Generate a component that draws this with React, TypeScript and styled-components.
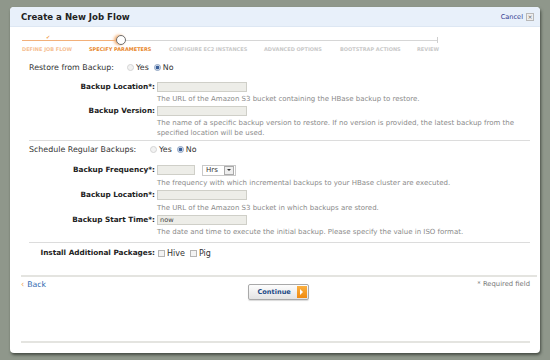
import React from 'react';
import styled, { createGlobalStyle } from 'styled-components';

const Global = createGlobalStyle`
   body {
      margin: 0;
      background: #8f978b;
      font-family: "DejaVu Sans", Verdana, sans-serif;
      color: #333;
   }
`

const Dialog = styled.div`
   margin: 7px 10px;
   width: 530px;
   height: 346px;
   background: #fff;
   border-radius: 4px;
   box-shadow: 1px 2px 3px rgba(40, 45, 38, 0.7);
   overflow: hidden;
   display: flex;
   flex-direction: column;
`

const Header = styled.div`
   display: flex;
   align-items: center;
   justify-content: space-between;
   height: 20px;
   padding: 0 6px 0 11px;
   background: #e8f0fa;
   border-bottom: 1px solid #dde7f3;
   box-sizing: border-box;
`

const Title = styled.div`
   font-size: 8.6px;
   font-weight: bold;
   color: #222;
`

const CancelBox = styled.div`
   display: flex;
   align-items: center;
   gap: 3px;
   font-size: 6.6px;
   color: #333a8f;
`

const CloseX = styled.span`
   display: inline-flex;
   align-items: center;
   justify-content: center;
   width: 6px;
   height: 6px;
   border: 1px solid #b8b8b8;
   background: #eee;
   font-size: 6px;
   line-height: 1;
   color: #666;
`

const Stepper = styled.div`
   padding: 8px 0 0 12px;
   height: 28px;
   box-sizing: border-box;
`

const Track = styled.div`
   display: flex;
   align-items: center;
   height: 10px;
   width: 416px;
`

const Segment = styled.div<{ $done?: boolean; $w?: number }>`
   height: 1px;
   background: ${p => (p.$done ? '#f2b07a' : '#d6d6d6')};
   ${p => (p.$w ? `width: ${p.$w}px;` : 'flex: 1;')}
   position: relative;
`

const EndTick = styled.div`
   width: 1px;
   height: 6px;
   background: #cfcfcf;
`

const Knob = styled.div`
   width: 8px;
   height: 8px;
   border: 1px solid #6f6f6f;
   border-radius: 50%;
   background: #fff;
   box-shadow: -2px 0 3px rgba(240, 150, 70, 0.8);
`

const Check = styled.span`
   position: absolute;
   left: 24px;
   top: -6px;
   font-size: 5px;
   color: #f0a050;
`

const Labels = styled.div`
   display: flex;
   height: 8px;
   align-items: center;
`

const StepLabel = styled.div<{ $state: 'done' | 'current' | 'todo'; $w: number }>`
   width: ${p => p.$w}px;
   flex: none;
   font-size: 5px;
   font-weight: bold;
   white-space: nowrap;
   color: ${p => (p.$state === 'done' ? '#f6bf94' : p.$state === 'current' ? '#e8872c' : '#c9c9c9')};
`

const Form = styled.div`
   padding: 0 10px 0 19px;
`

const QuestionRow = styled.div<{ $mt: number }>`
   display: flex;
   align-items: center;
   height: 12px;
   margin-top: ${p => p.$mt}px;
   font-size: 7.9px;
   color: #333;
`

const QuestionLabel = styled.span<{ $w: number }>`
   width: ${p => p.$w}px;
   flex: none;
`

const Option = styled.label`
   display: inline-flex;
   align-items: center;
   gap: 2px;
   margin-right: 5px;
   color: #333;
`

const Radio = styled.span<{ $on?: boolean }>`
   width: 5px;
   height: 5px;
   border-radius: 50%;
   border: 1px solid ${p => (p.$on ? '#8aa0c0' : '#d4d4d4')};
   background: ${p => (p.$on ? 'radial-gradient(circle, #3a5f99 45%, #dfe6f0 60%)' : '#f2f2f2')};
`

const Box = styled.span`
   width: 5px;
   height: 5px;
   border: 1px solid #b5b5b5;
   background: #f3f3f3;
`

const Field = styled.div<{ $mt: number }>`
   display: grid;
   grid-template-columns: 126px 1fr;
   column-gap: 2px;
   margin-top: ${p => p.$mt}px;
`

const FieldLabel = styled.div`
   text-align: right;
   font-size: 7.3px;
   font-weight: bold;
   line-height: 10px;
   white-space: nowrap;
   color: #222;
`

const Controls = styled.div`
   display: flex;
   align-items: center;
   gap: 7px;
   height: 10px;
`

const Input = styled.div<{ $w: number }>`
   width: ${p => p.$w}px;
   height: 10px;
   box-sizing: border-box;
   border: 1px solid #cfcfc8;
   background: #edede8;
   font-size: 6.6px;
   line-height: 8px;
   padding-left: 2px;
   color: #444;
`

const Select = styled.div`
   display: flex;
   align-items: center;
   justify-content: space-between;
   width: 34px;
   height: 11px;
   box-sizing: border-box;
   border: 1px solid #c9c9c9;
   padding: 0 1px 0 3px;
   font-size: 7px;
   color: #333;
`

const Arrow = styled.span`
   display: flex;
   align-items: center;
   justify-content: center;
   width: 8px;
   height: 7px;
   border: 1px solid #aaa;
   background: #eee;
   &::after {
      content: '';
      border-left: 2px solid transparent;
      border-right: 2px solid transparent;
      border-top: 2px solid #333;
   }
`

const Hint = styled.div<{ $mt: number }>`
   grid-column: 2;
   margin-top: ${p => p.$mt}px;
   font-size: 7px;
   line-height: 10px;
   white-space: nowrap;
   color: #8a8a8a;
`

const Rule = styled.div<{ $mt: number; $mb?: number }>`
   height: 1px;
   background: #dcdcdc;
   margin-top: ${p => p.$mt}px;
   margin-bottom: ${p => p.$mb || 0}px;
`

const PackagesRow = styled.div`
   display: grid;
   grid-template-columns: 126px 1fr;
   column-gap: 3px;
   align-items: center;
   height: 12px;
   margin-top: 4px;
`

const PackageOptions = styled.div`
   display: flex;
   align-items: center;
   font-size: 8px;
`

const Footer = styled.div`
   padding: 0 3px 0 11px;
`

const FooterRule = styled.div<{ $mt: number; $right: number }>`
   height: 2px;
   background: #e4e4e0;
   margin-top: ${p => p.$mt}px;
   margin-right: ${p => p.$right}px;
`

const FooterRow = styled.div`
   display: grid;
   grid-template-columns: 1fr auto 1fr;
   align-items: start;
   height: 64px;
   padding-top: 3px;
   box-sizing: border-box;
`

const Back = styled.a`
   display: flex;
   align-items: center;
   font-size: 7.8px;
   color: #2f69b0;
   text-decoration: none;
   span {
      color: #f0a050;
      font-size: 8px;
      margin-right: 3px;
   }
`

const ContinueButton = styled.button`
   display: flex;
   align-items: center;
   justify-content: space-between;
   width: 61px;
   height: 16px;
   margin-top: 4px;
   margin-left: -2px;
   padding: 0 1px 0 9px;
   border: 1px solid #a9a9a9;
   border-radius: 2px;
   background: linear-gradient(#fdfdfd, #e3e3e3);
   box-shadow: 0 1px 1px rgba(0, 0, 0, 0.15);
   font-family: "DejaVu Sans", Verdana, sans-serif;
   font-size: 6.6px;
   font-weight: bold;
   color: #1d4a86;
`

const Go = styled.span`
   display: flex;
   align-items: center;
   justify-content: center;
   width: 10px;
   height: 12px;
   background: linear-gradient(#fbb040, #f08a10);
   &::after {
      content: '';
      border-top: 3px solid transparent;
      border-bottom: 3px solid transparent;
      border-left: 3px solid #fff;
   }
`

const Required = styled.div`
   justify-self: end;
   margin-right: 7px;
   font-size: 6.8px;
   color: #777;
`

const steps: { label: string; state: 'done' | 'current' | 'todo'; w: number }[] = [
   { label: 'DEFINE JOB FLOW', state: 'done', w: 67 },
   { label: 'SPECIFY PARAMETERS', state: 'current', w: 80 },
   { label: 'CONFIGURE EC2 INSTANCES', state: 'todo', w: 95 },
   { label: 'ADVANCED OPTIONS', state: 'todo', w: 76 },
   { label: 'BOOTSTRAP ACTIONS', state: 'todo', w: 77 },
   { label: 'REVIEW', state: 'todo', w: 30 },
]

function App() {
   return (
      <>
         <Global />
         <Dialog>
            <Header>
               <Title>Create a New Job Flow</Title>
               <CancelBox>Cancel <CloseX>×</CloseX></CancelBox>
            </Header>

            <Stepper>
               <Track>
                  <Segment $done $w={94}><Check>✔</Check></Segment>
                  <Knob />
                  <Segment />
                  <EndTick />
               </Track>
               <Labels>
                  {steps.map(s => (
                     <StepLabel key={s.label} $state={s.state} $w={s.w}>{s.label}</StepLabel>
                  ))}
               </Labels>
            </Stepper>

            <Form>
               <QuestionRow $mt={6}>
                  <QuestionLabel $w={98}>Restore from Backup:</QuestionLabel>
                  <Option><Radio />Yes</Option>
                  <Option><Radio $on />No</Option>
               </QuestionRow>

               <Field $mt={9}>
                  <FieldLabel>Backup Location*:</FieldLabel>
                  <Controls><Input $w={90} /></Controls>
                  <Hint $mt={2}>The URL of the Amazon S3 bucket containing the HBase backup to restore.</Hint>
               </Field>
               <Field $mt={2}>
                  <FieldLabel>Backup Version:</FieldLabel>
                  <Controls><Input $w={90} /></Controls>
                  <Hint $mt={2}>
                     The name of a specific backup version to restore. If no version is provided, the latest backup from the
                     <br />specified location will be used.
                  </Hint>
               </Field>

               <Rule $mt={2} $mb={2} />

               <QuestionRow $mt={0}>
                  <QuestionLabel $w={121}>Schedule Regular Backups:</QuestionLabel>
                  <Option><Radio />Yes</Option>
                  <Option><Radio $on />No</Option>
               </QuestionRow>

               <Field $mt={10}>
                  <FieldLabel>Backup Frequency*:</FieldLabel>
                  <Controls>
                     <Input $w={38} />
                     <Select>Hrs<Arrow /></Select>
                  </Controls>
                  <Hint $mt={3}>The frequency with which incremental backups to your HBase cluster are executed.</Hint>
               </Field>
               <Field $mt={2}>
                  <FieldLabel>Backup Location*:</FieldLabel>
                  <Controls><Input $w={90} /></Controls>
                  <Hint $mt={3}>The URL of the Amazon S3 bucket in which backups are stored.</Hint>
               </Field>
               <Field $mt={2}>
                  <FieldLabel>Backup Start Time*:</FieldLabel>
                  <Controls><Input $w={90}>now</Input></Controls>
                  <Hint $mt={2}>The date and time to execute the initial backup. Please specify the value in ISO format.</Hint>
               </Field>

               <Rule $mt={5} />

               <PackagesRow>
                  <FieldLabel>Install Additional Packages:</FieldLabel>
                  <PackageOptions>
                     <Option><Box />Hive</Option>
                     <Option><Box />Pig</Option>
                  </PackageOptions>
               </PackagesRow>
            </Form>

            <Footer>
               <FooterRule $mt={16} $right={0} />
               <FooterRow>
                  <Back href="#"><span>‹</span>Back</Back>
                  <ContinueButton>Continue<Go /></ContinueButton>
                  <Required>* Required field</Required>
               </FooterRow>
               <FooterRule $mt={0} $right={7} />
            </Footer>
         </Dialog>
      </>
   );
}

export default App;
